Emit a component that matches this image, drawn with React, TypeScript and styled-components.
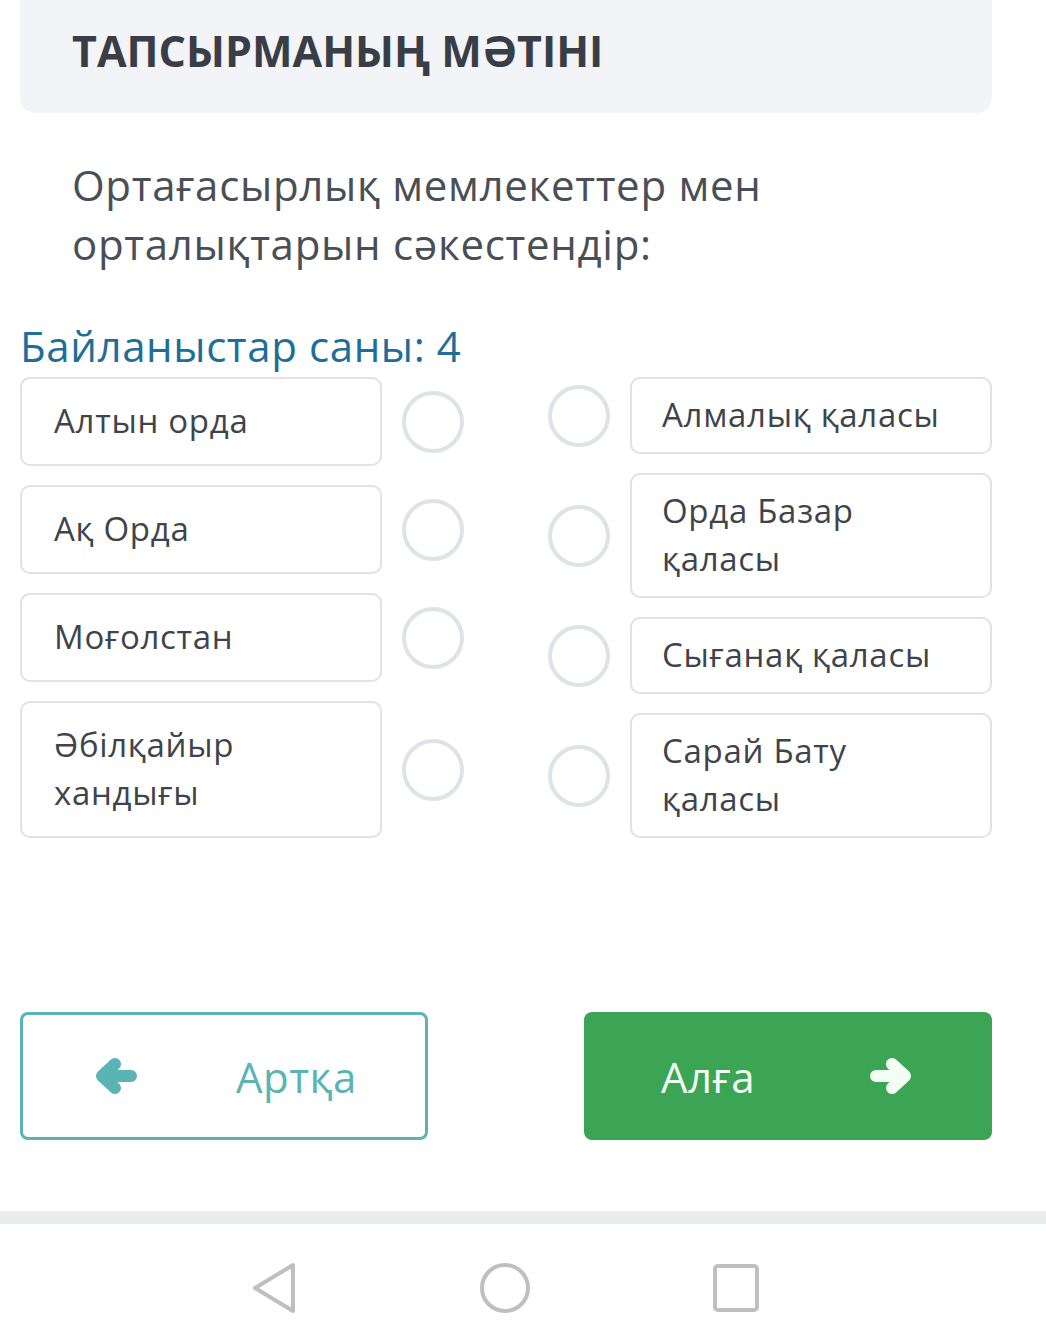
import React from "react";
import styled, { createGlobalStyle, css } from "styled-components";

const GlobalStyle = createGlobalStyle`
  html, body {
    margin: 0;
    padding: 0;
    background: #fff;
    font-family: "Open Sans", "Noto Sans", sans-serif;
  }
`;

const Page = styled.div`
  width: 1046px;
  display: flex;
  flex-direction: column;
`;

const Content = styled.div`
  width: 972px;
  padding-left: 20px;
  display: flex;
  flex-direction: column;
`;

const Header = styled.div`
  height: 113px;
  box-sizing: border-box;
  padding: 21px 52px 0;
  background: #f2f4f7;
  border-radius: 0 0 15px 15px;
`;

const Title = styled.h1`
  margin: 0;
  font-size: 43px;
  line-height: 1.4;
  font-weight: 700;
  color: #393e46;
`;

const Question = styled.p`
  margin: 42px 0 0;
  padding-left: 52px;
  font-size: 42px;
  line-height: 59px;
  letter-spacing: 0.7px;
  color: #4a4f56;
`;

const Count = styled.div`
  margin-top: 43px;
  font-size: 42px;
  line-height: 59px;
  letter-spacing: 0.6px;
  color: #1f6e99;
`;

const Matching = styled.div`
  margin-top: 2px;
  display: flex;
  justify-content: space-between;
`;

const Column = styled.div`
  display: flex;
  flex-direction: column;
  gap: 19px;
`;

const Row = styled.div`
  display: flex;
  align-items: center;
  gap: 20px;
`;

const Card = styled.div<{ side: "left" | "right" }>`
  box-sizing: border-box;
  width: 362px;
  border: 2px solid #dfe2e6;
  border-radius: 10px;
  font-size: 33px;
  line-height: 48px;
  letter-spacing: 0.7px;
  color: #3f444a;
  ${(p) =>
    p.side === "left"
      ? css`
          padding: 18px 28px 19px 32px;
        `
      : css`
          padding: 12px 28px 13px 30px;
        `}
`;

const Dot = styled.div`
  box-sizing: border-box;
  width: 62px;
  height: 62px;
  flex-shrink: 0;
  border: 4px solid #dfe3e7;
  border-radius: 50%;
`;

const Buttons = styled.div`
  margin-top: 174px;
  display: flex;
  justify-content: space-between;
`;

const NavButton = styled.button<{ variant: "back" | "next" }>`
  box-sizing: border-box;
  width: 408px;
  height: 128px;
  display: flex;
  align-items: center;
  border-radius: 8px;
  font-family: "Open Sans", "Noto Sans", sans-serif;
  font-size: 42px;
  letter-spacing: 0.5px;
  cursor: pointer;
  ${(p) =>
    p.variant === "back"
      ? css`
          background: #fff;
          border: 3px solid #5ab4b3;
          color: #5ab4b3;
          padding-left: 72px;
          gap: 99px;
        `
      : css`
          background: #3ca555;
          border: none;
          color: #f4fff4;
          justify-content: space-between;
          padding: 0 80px 0 77px;
        `}
`;

const SystemStrip = styled.div`
  margin-top: 71px;
  height: 13px;
  background: #ebeded;
`;

const SystemBar = styled.div`
  height: 96px;
  box-sizing: border-box;
  display: flex;
  align-items: flex-start;
  padding: 38px 0 0 244px;
  gap: 171px;
`;

const SysIcon = styled.div`
  width: 60px;
  height: 52px;
  display: flex;
  align-items: center;
  justify-content: center;
`;

function Arrow({ dir }: { dir: "left" | "right" }) {
  return (
    <svg width="42" height="36" viewBox="0 0 42 36">
      <g
        transform={dir === "left" ? "translate(42 0) scale(-1 1)" : undefined}
        fill="none"
        stroke="currentColor"
        strokeWidth="12"
        strokeLinecap="round"
        strokeLinejoin="round"
      >
        <path d="M6 18H35M22 6L35 18L22 30" />
      </g>
    </svg>
  );
}

const leftItems = ["Алтын орда", "Ақ Орда", "Моғолстан", "Әбілқайыр хандығы"];
const rightItems = ["Алмалық қаласы", "Орда Базар қаласы", "Сығанақ қаласы", "Сарай Бату қаласы"];

export default function App() {
  return (
    <Page>
      <GlobalStyle />
      <Content>
        <Header>
          <Title>ТАПСЫРМАНЫҢ МӘТІНІ</Title>
        </Header>
        <Question>
          Ортағасырлық мемлекеттер мен
          <br />
          орталықтарын сәкестендір:
        </Question>
        <Count>Байланыстар саны: 4</Count>
        <Matching>
          <Column>
            {leftItems.map((t) => (
              <Row key={t}>
                <Card side="left">{t}</Card>
                <Dot />
              </Row>
            ))}
          </Column>
          <Column>
            {rightItems.map((t) => (
              <Row key={t}>
                <Dot />
                <Card side="right">{t}</Card>
              </Row>
            ))}
          </Column>
        </Matching>
        <Buttons>
          <NavButton variant="back">
            <Arrow dir="left" />
            <span>Артқа</span>
          </NavButton>
          <NavButton variant="next">
            <span>Алға</span>
            <Arrow dir="right" />
          </NavButton>
        </Buttons>
      </Content>
      <SystemStrip />
      <SystemBar>
        <SysIcon>
          <svg width="46" height="52" viewBox="0 0 46 52">
            <path
              d="M42 3L4 26L42 49Z"
              fill="none"
              stroke="#bfbfbf"
              strokeWidth="4"
              strokeLinejoin="round"
            />
          </svg>
        </SysIcon>
        <SysIcon>
          <svg width="52" height="52" viewBox="0 0 52 52">
            <ellipse cx="26" cy="26" rx="23" ry="23" fill="none" stroke="#bfbfbf" strokeWidth="4" />
          </svg>
        </SysIcon>
        <SysIcon>
          <svg width="48" height="50" viewBox="0 0 48 50">
            <rect x="3" y="3" width="42" height="44" rx="3" fill="none" stroke="#bfbfbf" strokeWidth="4" />
          </svg>
        </SysIcon>
      </SystemBar>
    </Page>
  );
}
